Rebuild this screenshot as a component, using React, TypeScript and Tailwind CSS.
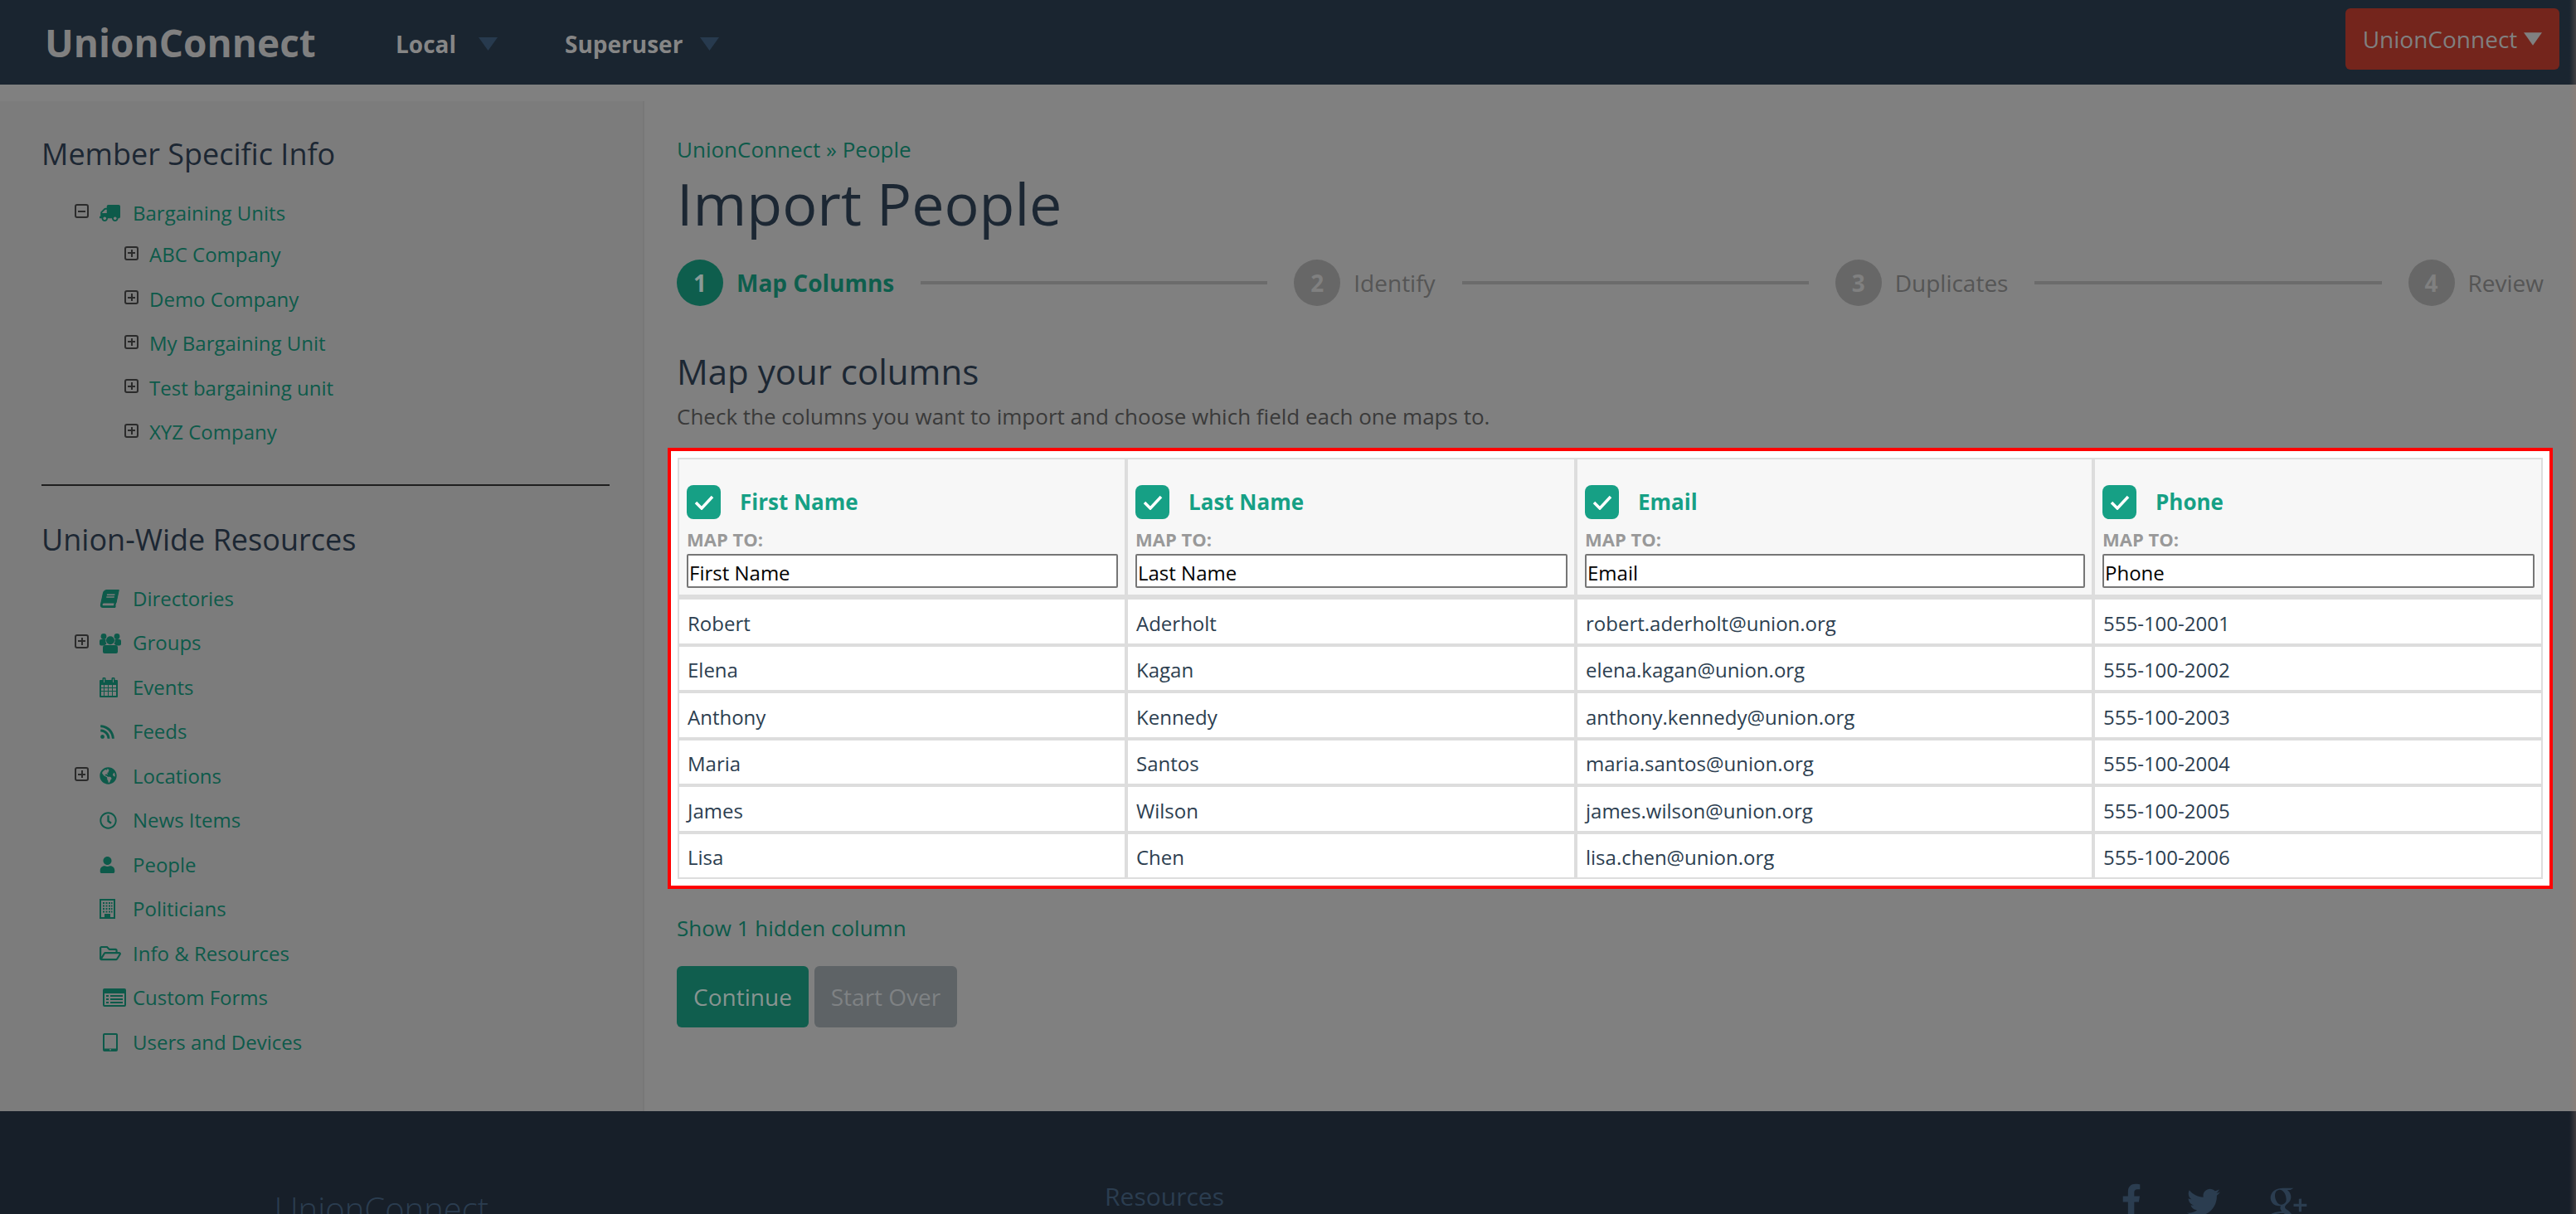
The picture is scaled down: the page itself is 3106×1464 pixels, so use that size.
import {
  FaBook,
  FaFacebookF,
  FaGlobeAmericas,
  FaRegClock,
  FaRegFolderOpen,
  FaRss,
  FaTruck,
  FaTwitter,
  FaUser,
} from "react-icons/fa";
import { TiSocialGooglePlus } from "react-icons/ti";
import type { ReactNode } from "react";

const columns = ["First Name", "Last Name", "Email", "Phone"];

const people = [
  ["Robert", "Aderholt", "robert.aderholt@union.org", "555-100-2001"],
  ["Elena", "Kagan", "elena.kagan@union.org", "555-100-2002"],
  ["Anthony", "Kennedy", "anthony.kennedy@union.org", "555-100-2003"],
  ["Maria", "Santos", "maria.santos@union.org", "555-100-2004"],
  ["James", "Wilson", "james.wilson@union.org", "555-100-2005"],
  ["Lisa", "Chen", "lisa.chen@union.org", "555-100-2006"],
];

const units = ["ABC Company", "Demo Company", "My Bargaining Unit", "Test bargaining unit", "XYZ Company"];

function Triangle({ className }: { className: string }) {
  return (
    <svg viewBox="0 0 23 16" className={className} fill="currentColor">
      <polygon points="0,0 23,0 11.5,16" />
    </svg>
  );
}

function Expander({ open }: { open?: boolean }) {
  return (
    <span className="w-[17px] h-[17px] rounded-[3px] border-2 border-[#2b2b2b] flex items-center justify-center relative shrink-0">
      <span className="w-[9px] h-[2px] bg-[#2b2b2b]" />
      {!open && <span className="absolute w-[2px] h-[9px] bg-[#2b2b2b]" />}
    </span>
  );
}

function UsersIcon() {
  return (
    <svg viewBox="0 0 26 25" className="w-[26px] h-[25px]" fill="currentColor">
      <circle cx="5" cy="4.500" r="3.400" />
      <circle cx="21" cy="4.500" r="3.400" />
      <circle cx="13" cy="9.300" r="5" />
      <path d="M2 8h5.500a7 7 0 0 0 1 5.500 8 8 0 0 0-2.500 2H2a2 2 0 0 1-2-2V10a2 2 0 0 1 2-2z" />
      <path d="M24 8h-5.500a7 7 0 0 1-1 5.500 8 8 0 0 1 2.500 2h4a2 2 0 0 0 2-2V10a2 2 0 0 0-2-2z" />
      <path d="M7 15h12a3 3 0 0 1 3 3v5a2 2 0 0 1-2 2H6a2 2 0 0 1-2-2v-5a3 3 0 0 1 3-3z" />
    </svg>
  );
}

function CalendarIcon() {
  return (
    <svg viewBox="0 0 22 24" className="w-[22px] h-[24px]" fill="currentColor">
      <path
        fillRule="evenodd"
        d="M1 3h2.500V1.500a2 2 0 0 1 4 0V3h7V1.500a2 2 0 0 1 4 0V3H21a1 1 0 0 1 1 1v19a1 1 0 0 1-1 1H1a1 1 0 0 1-1-1V4a1 1 0 0 1 1-1zM5 1.500V6h1V1.500zM16 1.500V6h1V1.500zM2 9v3h3V9zM6 9v3h4V9zM11 9v3h4V9zM16 9v3h4V9zM2 13v3h3v-3zM6 13v3h4v-3zM11 13v3h4v-3zM16 13v3h4v-3zM2 17v5h3v-5zM6 17v5h4v-5zM11 17v5h4v-5zM16 17v5h4v-5z"
      />
    </svg>
  );
}

function BuildingIcon() {
  return (
    <svg viewBox="0 0 19 24" className="w-[19px] h-[24px]" fill="currentColor">
      <path
        fillRule="evenodd"
        d="M0 0h19v24H0zM2 2v20h4v-4h7v4h4V2zM4 4h2v2H4zM7.500 4h2v2h-2zM11 4h2v2h-2zM14 4h1.500v2H14zM4 7.500h2v2H4zM7.500 7.500h2v2h-2zM11 7.500h2v2h-2zM14 7.500h1.500v2H14zM4 11h2v2H4zM7.500 11h2v2h-2zM11 11h2v2h-2zM14 11h1.500v2H14zM4 14.500h2v2H4zM7.500 14.500h2v2h-2zM11 14.500h2v2h-2zM14 14.500h1.500v2H14z"
      />
    </svg>
  );
}

function FormIcon() {
  return (
    <svg viewBox="0 0 28 22" className="w-[28px] h-[22px]" fill="currentColor">
      <path
        fillRule="evenodd"
        d="M2 0h24a2 2 0 0 1 2 2v18a2 2 0 0 1-2 2H2a2 2 0 0 1-2-2V2a2 2 0 0 1 2-2zM2 6v14h24V6zM4 8h3v2H4zM9 8h15v2H9zM4 12h3v2H4zM9 12h15v2H9zM4 16h3v2H4zM9 16h15v2H9z"
      />
    </svg>
  );
}

function TabletIcon() {
  return (
    <svg viewBox="0 0 18 22" className="w-[18px] h-[22px]" fill="currentColor">
      <path
        fillRule="evenodd"
        d="M2 0h14a2 2 0 0 1 2 2v18a2 2 0 0 1-2 2H2a2 2 0 0 1-2-2V2a2 2 0 0 1 2-2zM2 2v16.500h14V2zM8 19.200h2v1.300H8z"
      />
    </svg>
  );
}

const resources: { label: string; icon: ReactNode; expand?: boolean; inset?: boolean }[] = [
  { label: "Directories", icon: <FaBook className="w-[20px] h-[22px] -skew-x-12 ml-[2px]" /> },
  { label: "Groups", icon: <UsersIcon />, expand: true },
  { label: "Events", icon: <CalendarIcon /> },
  { label: "Feeds", icon: <FaRss className="w-[19px] h-[19px]" /> },
  { label: "Locations", icon: <FaGlobeAmericas className="w-[21px] h-[21px]" />, expand: true },
  { label: "News Items", icon: <FaRegClock className="w-[21px] h-[21px]" /> },
  { label: "People", icon: <FaUser className="w-[19px] h-[20px]" /> },
  { label: "Politicians", icon: <BuildingIcon /> },
  { label: "Info & Resources", icon: <FaRegFolderOpen className="w-[26px] h-[23px]" /> },
  { label: "Custom Forms", icon: <FormIcon />, inset: true },
  { label: "Users and Devices", icon: <TabletIcon />, inset: true },
];

function TreeRow({ expander, icon, label, inset }: { expander?: ReactNode; icon: ReactNode; label: string; inset?: boolean }) {
  return (
    <div className="h-[53.5px] flex items-center pl-[40px] text-[24px] text-[#0d5a4a]">
      <span className="w-[30px] shrink-0 -mt-[4px]">{expander}</span>
      <span className={`w-[40px] shrink-0 flex items-center ${inset ? "pl-[4px]" : ""}`}>{icon}</span>
      <span>{label}</span>
    </div>
  );
}

function Step({ n, label, active }: { n: number; label: string; active?: boolean }) {
  return (
    <div className="flex items-center gap-[16px] shrink-0">
      <span
        className={`w-[56px] h-[56px] rounded-full flex items-center justify-center text-[28px] font-bold ${
          active ? "bg-[#0e5e4d] text-[#8a9a96]" : "bg-[#676767] text-[#808080]"
        }`}
      >
        {n}
      </span>
      <span className={`text-[28px] ${active ? "font-bold text-[#0e5e4d]" : "text-[#555555]"}`}>{label}</span>
    </div>
  );
}

export default function App() {
  return (
    <div className="relative w-[3106px] h-[1464px] overflow-hidden bg-[#808080] font-['Open_Sans',sans-serif]">
      <header className="h-[102px] bg-[#1a2530] flex items-center pl-[54px] pr-[20px]">
        <span className="text-[46px] font-bold text-[#808080] w-[423px]">UnionConnect</span>
        <span className="text-[28px] font-bold text-[#868686] mt-[4px] w-[100px]">Local</span>
        <Triangle className="w-[23px] h-[16px] text-[#273a4e] mt-[4px]" />
        <span className="text-[28px] font-bold text-[#868686] mt-[4px] ml-[81px] w-[163px]">Superuser</span>
        <Triangle className="w-[23px] h-[16px] text-[#273a4e] mt-[4px]" />
        <button className="ml-auto w-[258px] h-[74px] -mt-[8px] rounded-[6px] bg-[#74251c] text-[28px] text-[#808080] flex items-center justify-center gap-[8px]">
          UnionConnect
          <Triangle className="w-[22px] h-[16px] text-[#808080]" />
        </button>
      </header>

      <div className="flex h-[1238px]">
        <aside className="w-[777px] mt-[20px] bg-[#7c7c7c] border-r-2 border-[#787878] pl-[50px] pr-[40px] shrink-0">
          <h3 className="text-[36px] text-[#1c2733] leading-[50px] mt-[39px]">Member Specific Info</h3>
          <div className="mt-[19px]">
            <TreeRow expander={<Expander open />} icon={<FaTruck className="w-[25px] h-[22px] -scale-x-100" />} label="Bargaining Units" />
            <div className="-mt-[3px]">
              {units.map((u) => (
                <div key={u} className="h-[53.5px] flex items-center pl-[100px] text-[24px] text-[#0d5a4a]">
                  <span className="w-[30px] shrink-0 -mt-[4px]">
                    <Expander />
                  </span>
                  <span>{u}</span>
                </div>
              ))}
            </div>
          </div>
          <div className="h-[2px] bg-[#1f1f1f] mt-[36px]" />
          <h3 className="text-[36px] text-[#1c2733] leading-[50px] mt-[40px]">Union-Wide Resources</h3>
          <div className="mt-[19px]">
            {resources.map((r) => (
              <TreeRow
                key={r.label}
                expander={r.expand ? <Expander /> : undefined}
                icon={r.icon}
                label={r.label}
                inset={r.inset}
              />
            ))}
          </div>
        </aside>

        <main className="flex-1 pl-[39px] pr-[39px]">
          <div className="text-[26px] text-[#0d5a4a] leading-[40px] mt-[58px]">UnionConnect » People</div>
          <h1 className="text-[70px] text-[#1c2733] leading-[100px] -mt-[5px]">Import People</h1>
          <div className="flex items-center mt-[18px]">
            <Step n={1} label="Map Columns" active />
            <div className="flex-1 h-[4px] bg-[#6b6b6b] mx-[32px]" />
            <Step n={2} label="Identify" />
            <div className="flex-1 h-[4px] bg-[#6b6b6b] mx-[32px]" />
            <Step n={3} label="Duplicates" />
            <div className="flex-1 h-[4px] bg-[#6b6b6b] mx-[32px]" />
            <Step n={4} label="Review" />
          </div>
          <h2 className="text-[42px] text-[#1c2733] leading-[60px] mt-[49px]">Map your columns</h2>
          <p className="text-[26px] text-[#3a3a3a] leading-[40px] mt-[4px]">
            Check the columns you want to import and choose which field each one maps to.
          </p>

          <div className="-mx-[11px] mt-[18px] border-4 border-[#ff0000] bg-white p-[8px]">
            <div className="border-2 border-[#dddddd]">
              <table className="w-full border-separate border-spacing-0 table-fixed">
                <colgroup>
                  <col className="w-[541px]" />
                  <col className="w-[542px]" />
                  <col className="w-[624px]" />
                  <col />
                </colgroup>
                <thead>
                  <tr>
                    {columns.map((c, i) => (
                      <th
                        key={c}
                        className={`h-[169px] bg-[#f7f7f7] border-b-[6px] border-[#dddddd] pl-[9px] pr-[8px] pb-[8px] align-bottom text-left ${
                          i < 3 ? "border-r-4" : ""
                        }`}
                      >
                        <div className="flex items-center gap-[23px] mb-[9px]">
                          <span className="w-[41px] h-[41px] rounded-[8px] bg-[#16a085] flex items-center justify-center">
                            <svg viewBox="0 0 24 18" className="w-[24px] h-[18px]" fill="none" stroke="white" strokeWidth="3.500">
                              <polyline points="2,9 9,16 22,2" />
                            </svg>
                          </span>
                          <span className="text-[26px] font-bold text-[#16a085]">{c}</span>
                        </div>
                        <div className="text-[22px] font-bold text-[#999999] leading-[30px] mb-[3px]">MAP TO:</div>
                        <select
                          defaultValue={c}
                          className="block w-full h-[41px] appearance-none border-2 border-[#767676] rounded-[2px] bg-white pt-[3px] pl-[1px] text-[24px] font-normal text-black"
                        >
                          <option>{c}</option>
                        </select>
                      </th>
                    ))}
                  </tr>
                </thead>
                <tbody>
                  {people.map((row, r) => (
                    <tr key={r}>
                      {row.map((cell, i) => (
                        <td
                          key={i}
                          className={`h-[52.5px] px-[10px] pt-[5px] text-[24px] text-[#2c3e50] border-[#dddddd] ${i < 3 ? "border-r-4" : ""} ${
                            r < people.length - 1 ? "h-[56.5px] border-b-4" : ""
                          }`}
                        >
                          {cell}
                        </td>
                      ))}
                    </tr>
                  ))}
                </tbody>
              </table>
            </div>
          </div>

          <div className="text-[26px] text-[#0d5a4a] leading-[40px] mt-[27px]">Show 1 hidden column</div>
          <div className="flex gap-[7px] mt-[26px]">
            <button className="w-[159px] h-[74px] rounded-[6px] bg-[#105e4e] text-[28px] text-[#889491]">Continue</button>
            <button className="w-[172px] h-[74px] rounded-[6px] bg-[#5e6366] text-[28px] text-[#7f8284]">Start Over</button>
          </div>
        </main>
      </div>

      <footer className="h-[124px] bg-[#171f29] flex text-[#2b3d50]">
        <div className="w-[920px] text-center text-[40px] font-light leading-[50px] mt-[93px]">UnionConnect</div>
        <div className="w-[968px] text-center text-[30px] leading-[44px] mt-[81px]">Resources</div>
        <div className="flex items-start pl-[670px] mt-[87px] text-[#2b3d50]">
          <FaFacebookF className="w-[24px] h-[40px]" />
          <FaTwitter className="w-[40px] h-[46px] ml-[55px]" />
          <TiSocialGooglePlus className="w-[76px] h-[76px] ml-[41px] -mt-[10px]" />
        </div>
      </footer>

      <div className="absolute inset-y-0 right-0 w-[8px] bg-linear-to-r from-transparent to-[#a08070]/30" />
    </div>
  );
}
